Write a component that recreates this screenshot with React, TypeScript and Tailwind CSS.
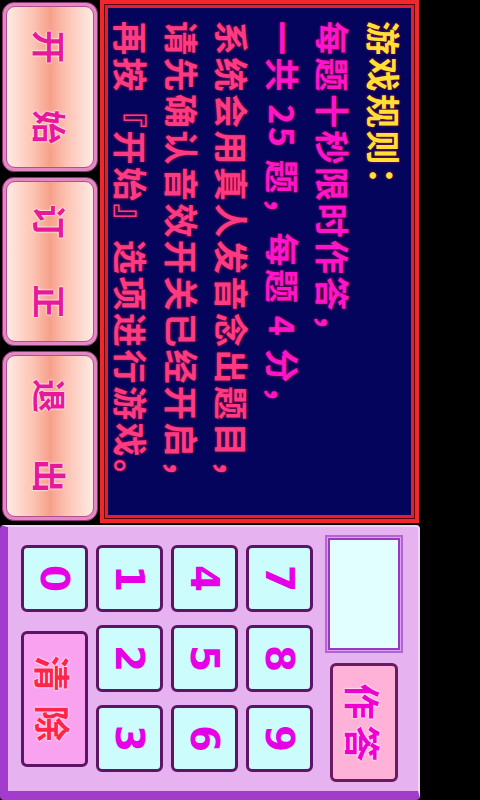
import React from "react";

const cjk = "font-['Noto_Sans_CJK_SC','Noto_Sans_CJK_JP',sans-serif]";

const rules = [
  { text: "游戏规则：", color: "text-[#ffe033]" },
  { text: "每题十秒限时作答，", color: "text-[#ff14cc]" },
  { text: "一共 25 题，每题 4 分，", color: "text-[#ff14cc]" },
  { text: "系统会用真人发音念出题目，", color: "text-[#ff3a82]" },
  { text: "请先确认音效开关已经开启，", color: "text-[#ff3a82]" },
  { text: "再按『开始』选项进行游戏。", color: "text-[#ff3a82]" }
];

const menu = [
  { a: "开", b: "始", w: "w-[170px]" },
  { a: "订", b: "正", w: "w-[169px]" },
  { a: "退", b: "出", w: "w-[170px]" }
];

function MenuButton({ a, b, w }: { a: string; b: string; w: string }) {
  return (
    <div className={`${w} h-[96px] rounded-[12px] border border-[#8e3474] bg-[#e488c4] p-[3px]`}>
      <div className="flex h-full w-full items-center justify-center gap-[46px] rounded-[9px] border border-[#b0508e] bg-[linear-gradient(to_bottom,#ffeae4,#fcc4b4_30%,#f6a08a_50%,#fcc4b4_70%,#ffeae4)]">
        <span className={`${cjk} text-[34px] font-bold leading-none text-[#e8189a] [text-shadow:0_0_2px_#fff,0_0_2px_#fff]`}>{a}</span>
        <span className={`${cjk} text-[34px] font-bold leading-none text-[#e8189a] [text-shadow:0_0_2px_#fff,0_0_2px_#fff]`}>{b}</span>
      </div>
    </div>
  );
}

function Key({ label }: { label: string }) {
  return (
    <div className="flex h-[67px] w-[67px] items-center justify-center rounded-[6px] border-[3px] border-[#5c1466] bg-[#ccfcfc]">
      <span className="font-['DejaVu_Sans',sans-serif] text-[39px] font-bold leading-none text-[#e600e6]">{label}</span>
    </div>
  );
}

export default function App() {
  return (
    <div className="h-[800px] w-[480px] overflow-hidden bg-black">

      {/* landscape screen, turned a quarter clockwise */}

      <div className="flex h-[480px] w-[800px] origin-top-left translate-x-[480px] rotate-90 bg-black">

        <div className="flex w-[523px] flex-col pt-[61px]">

          {/* Rules */}

          <div className="h-[319px] border-4 border-[#f0282c] bg-[#5a0010] p-px">
            <div className="h-full border-[3px] border-[#e41e2c] bg-[#04045c] pl-[13px] pt-[2px]">
              {rules.map((r) => (
                <p
                  key={r.text}
                  className={`${cjk} ${r.color} whitespace-pre text-[34px] font-bold leading-[50.5px] tracking-[2.5px] [text-shadow:0_0_3px_#a0103c]`}
                >
                  {r.text}
                </p>
              ))}
            </div>
          </div>

          {/* Menu */}

          <div className="mt-[2px] flex gap-[5px] pl-[2px]">
            {menu.map((m) => (
              <MenuButton key={m.a} {...m} />
            ))}
          </div>

        </div>

        {/* Keypad */}

        <div className="ml-[2px] mt-[60px] flex h-[420px] w-[275px] flex-col rounded-[4px] border-b-[8px] border-l-2 border-r-[9px] border-t-2 border-b-[#a23ccc] border-l-[#f2d2fa] border-r-[#a23ccc] border-t-[#f2d2fa] bg-[#e6b2f0]">

          <div className="mt-[15px] flex items-center gap-[10px] pl-[8px]">
            <div className="h-[78px] w-[118px] border-2 border-[#b066d2] bg-[#d8a4ee] p-px">
              <div className="h-full w-full border-2 border-[#9a36c2] bg-[#e2ffff]" />
            </div>
            <div className="flex h-[68px] w-[119px] items-center justify-center gap-[6px] rounded-[6px] border-[3px] border-[#6a1a5e] bg-[#ffb2d8]">
              <span className={`${cjk} text-[36px] font-bold leading-none text-[#f000d0] [text-shadow:0_0_2px_#fff,0_0_2px_#fff]`}>作</span>
              <span className={`${cjk} text-[36px] font-bold leading-none text-[#f000d0] [text-shadow:0_0_2px_#fff,0_0_2px_#fff]`}>答</span>
            </div>
          </div>

          <div className="mt-[12px] grid grid-cols-[67px_67px_67px] gap-x-[13px] gap-y-[8px] pl-[18px]">
            {["7", "8", "9", "4", "5", "6", "1", "2", "3", "0"].map((k) => (
              <Key key={k} label={k} />
            ))}
            <div className="col-span-2 flex h-[67px] w-[136px] items-center justify-center gap-[14px] justify-self-center rounded-[6px] border-[3px] border-[#5c1466] bg-[#f8a2f0]">
              <span className={`${cjk} text-[36px] font-bold leading-none text-[#ff2448] [text-shadow:0_0_2px_#fff,0_0_2px_#fff]`}>清</span>
              <span className={`${cjk} text-[36px] font-bold leading-none text-[#ff2448] [text-shadow:0_0_2px_#fff,0_0_2px_#fff]`}>除</span>
            </div>
          </div>

        </div>

      </div>

    </div>
  );
}
